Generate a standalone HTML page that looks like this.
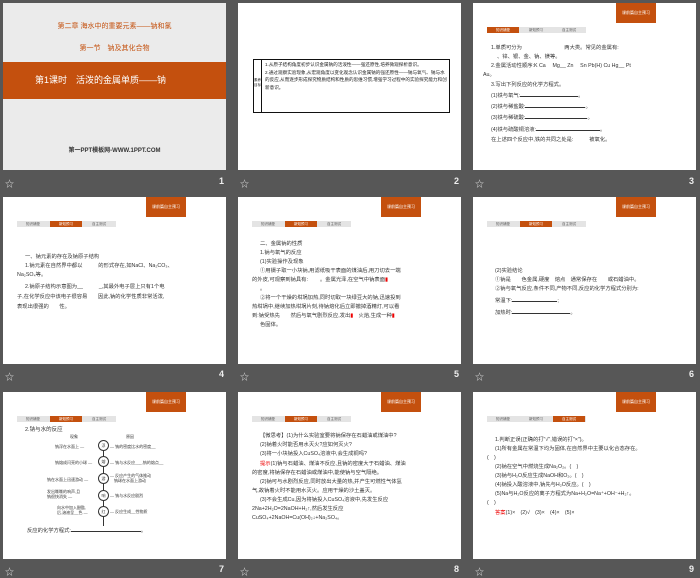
<!DOCTYPE html>
<html><head><meta charset="utf-8"><style>
*{margin:0;padding:0;box-sizing:border-box}
body{width:700px;height:577px;background:#575757;position:relative;overflow:hidden;font-family:"Liberation Sans","Noto Sans CJK SC",sans-serif}
.s{position:absolute;width:223px;height:167px;background:#fff;overflow:hidden;color:#333}
.cap{position:absolute;width:223px;height:14px;color:#eee;font-size:9px}
.cap .st{position:absolute;left:2px;top:1px;font-size:9px;color:#ddd}
.cap .n{position:absolute;right:2px;top:0;font-weight:bold;font-size:9px}
.tag{position:absolute;left:143px;top:0;width:40px;height:20px;background:#c4500e;color:#fff;font-size:4px;text-align:center;line-height:20px}
.tabs{position:absolute;left:14px;top:24px;width:99px;height:6px;background:#e4e4e4;font-size:3.5px;color:#555;display:flex}
.tabs span{flex:1;text-align:center;line-height:6px;margin-right:1px}
.tabs .a{background:#c4500e;color:#fff}
.t{position:absolute;font-size:5.3px;line-height:9px;white-space:nowrap;color:#333}
.u{display:inline-block;border-bottom:0.6px solid #333;height:6px}
.r{color:#e00}
</style></head><body>

<!-- slide 1 -->
<div class="s" style="left:3px;top:3px;background:#ebebeb">
  <div style="position:absolute;top:18px;width:100%;text-align:center;font-size:7px;color:#c4500e">第二章 海水中的重要元素——钠和氯</div>
  <div style="position:absolute;top:40px;width:100%;text-align:center;font-size:7px;color:#c4500e">第一节　钠及其化合物</div>
  <div style="position:absolute;top:59px;width:100%;height:37px;background:#c4500e;color:#fff;font-size:9px;line-height:37px;padding-left:32px">第1课时　活泼的金属单质——钠</div>
  <div style="position:absolute;top:142px;width:100%;text-align:center;font-size:6px;font-weight:bold;color:#333">第一PPT模板网-WWW.1PPT.COM</div>
</div>
<div class="cap" style="left:3px;top:176px"><span class="st">☆</span><span class="n">1</span></div>

<!-- slide 2 -->
<div class="s" style="left:238px;top:3px">
  <div style="position:absolute;left:15px;top:54px;width:80px;height:2px"></div>
  <div style="position:absolute;left:15px;top:56px;width:197px;height:54px;border:1.5px solid #111;font-size:4.6px;line-height:7.5px;padding:1px 2px 0 11px;color:#222">
    <div style="position:absolute;left:0;top:0;bottom:0;width:8px;border-right:1px solid #111;font-size:3.5px;line-height:5px;padding-top:18px;text-align:center">素养目标</div>
    1.从原子结构角度初步认识金属钠的活泼性——强还原性,培养微观探析意识。<br>2.通过观察实验现象,从宏观角度以变化观念认识金属钠的强还原性——钠与氧气、钠与水的反应,从而逐步形成探究物质结构和性质的思维习惯,增强学习过程中的实验探究能力和创新意识。
  </div>
</div>
<div class="cap" style="left:238px;top:176px"><span class="st">☆</span><span class="n">2</span></div>

<!-- slide 3 -->
<div class="s" style="left:473px;top:3px">
  <div class="tag">课前篇自主预习</div>
  <div class="tabs"><span class="a">知识铺垫</span><span>新知预习</span><span>自主测试</span></div>
  <div class="t" style="left:18px;top:41px">1.单质可分为　　　　　　　　两大类。常见的金属有:</div>
  <div class="t" style="left:24px;top:50px">、锌、银、金、钠、镁等。</div>
  <div class="t" style="left:18px;top:59px">2.金属活动性顺序:K Ca　 Mg__ Zn　 Sn Pb(H) Cu Hg__ Pt</div>
  <div class="t" style="left:10px;top:68px">Au。</div>
  <div class="t" style="left:18px;top:78px">3.写出下列反应的化学方程式。</div>
  <div class="t" style="left:18px;top:88px">(1)铁与氧气:<span class="u" style="width:58px"></span>。</div>
  <div class="t" style="left:18px;top:99px">(2)铁与稀盐酸:<span class="u" style="width:60px"></span>。</div>
  <div class="t" style="left:18px;top:110px">(3)铁与稀硫酸:<span class="u" style="width:62px"></span>。</div>
  <div class="t" style="left:18px;top:122px">(4)铁与硫酸铜溶液:<span class="u" style="width:64px"></span>。</div>
  <div class="t" style="left:18px;top:133px">在上述四个反应中,铁的共同之处是:　　　被氧化。</div>
</div>
<div class="cap" style="left:473px;top:176px"><span class="st">☆</span><span class="n">3</span></div>

<!-- slide 4 -->
<div class="s" style="left:3px;top:197px">
  <div class="tag">课前篇自主预习</div>
  <div class="tabs"><span>知识铺垫</span><span class="a">新知预习</span><span>自主测试</span></div>
  <div class="t" style="left:22px;top:56px">一、钠元素的存在及钠原子结构</div>
  <div class="t" style="left:22px;top:65px">1.钠元素在自然界中都以　　　的形式存在,如NaCl、Na₂CO₃、</div>
  <div class="t" style="left:14px;top:74px">Na₂SO₄等。</div>
  <div class="t" style="left:22px;top:86px">2.钠原子结构示意图为__　　　_,其最外电子层上只有1个电</div>
  <div class="t" style="left:14px;top:96px">子,在化学反应中该电子很容易　　因此,钠的化学性质非常活泼,</div>
  <div class="t" style="left:14px;top:106px">表现出很强的　　性。</div>
</div>
<div class="cap" style="left:3px;top:369px"><span class="st">☆</span><span class="n">4</span></div>

<!-- slide 5 -->
<div class="s" style="left:238px;top:197px">
  <div class="tag">课前篇自主预习</div>
  <div class="tabs"><span>知识铺垫</span><span class="a">新知预习</span><span>自主测试</span></div>
  <div class="t" style="left:22px;top:43px">二、金属钠的性质</div>
  <div class="t" style="left:22px;top:52px">1.钠与氧气的反应</div>
  <div class="t" style="left:22px;top:61px">(1)实验操作及现象</div>
  <div class="t" style="left:22px;top:70px">①用镊子取一小块钠,用滤纸吸干表面的煤油后,用刀切去一端</div>
  <div class="t" style="left:14px;top:79px">的外皮,可观察到钠具有:　　 。金属光泽,在空气中钠表面<span class="r">▮</span></div>
  <div class="t" style="left:22px;top:88px">。</div>
  <div class="t" style="left:22px;top:97px">②将一个干燥的坩埚加热,同时切取一块绿豆大的钠,迅速投到</div>
  <div class="t" style="left:14px;top:106px">热坩埚中,继续加热坩埚片刻,待钠熔化后立即撤掉酒精灯,可以看</div>
  <div class="t" style="left:14px;top:115px">到:钠受热先　　然后与氧气剧烈反应,发出<span class="r">▮</span>　火焰,生成一种<span class="r">▮</span></div>
  <div class="t" style="left:22px;top:124px">色固体。</div>
</div>
<div class="cap" style="left:238px;top:369px"><span class="st">☆</span><span class="n">5</span></div>

<!-- slide 6 -->
<div class="s" style="left:473px;top:197px">
  <div class="tag">课前篇自主预习</div>
  <div class="tabs"><span>知识铺垫</span><span class="a">新知预习</span><span>自主测试</span></div>
  <div class="t" style="left:22px;top:70px">(2)实验结论</div>
  <div class="t" style="left:22px;top:79px">①钠是　　色金属,硬度　熔点　通常保存在　　或石蜡油中。</div>
  <div class="t" style="left:22px;top:88px">②钠与氧气反应,条件不同,产物不同,反应的化学方程式分别为:</div>
  <div class="t" style="left:22px;top:99px">常温下:<span class="u" style="width:45px"></span>;</div>
  <div class="t" style="left:22px;top:111px">加热时:<span class="u" style="width:58px"></span>。</div>
</div>
<div class="cap" style="left:473px;top:369px"><span class="st">☆</span><span class="n">6</span></div>

<!-- slide 7 -->
<div class="s" style="left:3px;top:392px">
  <div class="tag">课前篇自主预习</div>
  <div class="tabs"><span>知识铺垫</span><span class="a">新知预习</span><span>自主测试</span></div>
  <div class="t" style="left:22px;top:34px;font-size:5.5px">2.钠与水的反应</div>
  <div class="t" style="left:67px;top:40px;font-size:4px">现象</div>
  <div class="t" style="left:123px;top:40px;font-size:4px">原因</div>
  <div style="position:absolute;left:100px;top:52px;width:1px;height:82px;background:#333"></div>
  <div class="t" style="left:52px;top:50px;font-size:4px">钠浮在水面上 —</div>
  <div class="t" style="left:52px;top:66px;font-size:4px">钠熔成闪亮的小球 —</div>
  <div class="t" style="left:44px;top:83px;font-size:4px">钠在水面上迅速游动 —</div>
  <div class="t" style="left:44px;top:97px;font-size:4px;line-height:5px">发出嘶嘶的响声,且<br>钠很快消失 —</div>
  <div class="t" style="left:54px;top:113px;font-size:4px;line-height:5px">向水中加入酚酞,<br>后,溶液呈__色 —</div>
  <div style="position:absolute;left:95px;top:48px;width:11px;height:11px;border:1px solid #333;border-radius:50%;background:#fff;font-size:4px;text-align:center;line-height:9px">浮</div>
  <div style="position:absolute;left:95px;top:64px;width:11px;height:11px;border:1px solid #333;border-radius:50%;background:#fff;font-size:4px;text-align:center;line-height:9px">熔</div>
  <div style="position:absolute;left:95px;top:81px;width:11px;height:11px;border:1px solid #333;border-radius:50%;background:#fff;font-size:4px;text-align:center;line-height:9px">游</div>
  <div style="position:absolute;left:95px;top:98px;width:11px;height:11px;border:1px solid #333;border-radius:50%;background:#fff;font-size:4px;text-align:center;line-height:9px">响</div>
  <div style="position:absolute;left:95px;top:114px;width:11px;height:11px;border:1px solid #333;border-radius:50%;background:#fff;font-size:4px;text-align:center;line-height:9px">红</div>
  <div class="t" style="left:107px;top:50px;font-size:4px">— 钠的密度比水的密度__</div>
  <div class="t" style="left:107px;top:66px;font-size:4px">— 钠与水反应___,钠的熔点__</div>
  <div class="t" style="left:107px;top:81px;font-size:4px;line-height:5px">— 反应产生的气体推动<br>　钠球在水面上游动</div>
  <div class="t" style="left:107px;top:99px;font-size:4px">— 钠与水反应剧烈</div>
  <div class="t" style="left:107px;top:115px;font-size:4px">— 反应生成__性物质</div>
  <div class="t" style="left:24px;top:134px">反应的化学方程式:<span class="u" style="width:70px"></span>。</div>
</div>
<div class="cap" style="left:3px;top:564px"><span class="st">☆</span><span class="n">7</span></div>

<!-- slide 8 -->
<div class="s" style="left:238px;top:392px">
  <div class="tag">课前篇自主预习</div>
  <div class="tabs"><span>知识铺垫</span><span class="a">新知预习</span><span>自主测试</span></div>
  <div class="t" style="left:22px;top:40px">【微思考】(1)为什么实验室要将钠保存在石蜡油或煤油中?</div>
  <div class="t" style="left:22px;top:49px">(2)钠着火时能否用水灭火?应如何灭火?</div>
  <div class="t" style="left:22px;top:58px">(3)将一小块钠投入CuSO₄溶液中,会生成铜吗?</div>
  <div class="t" style="left:22px;top:68px"><span class="r">提示</span>(1)钠与石蜡油、煤油不反应,且钠的密度大于石蜡油、煤油</div>
  <div class="t" style="left:14px;top:77px">的密度,将钠保存在石蜡油或煤油中,能使钠与空气隔绝。</div>
  <div class="t" style="left:22px;top:86px">(2)钠可与水剧烈反应,同时放出大量的热,并产生可燃性气体氢</div>
  <div class="t" style="left:14px;top:95px">气,故钠着火时不能用水灭火。应用干燥的沙土盖灭。</div>
  <div class="t" style="left:22px;top:104px">(3)不会生成Cu,因为将钠投入CuSO₄溶液中,先发生反应</div>
  <div class="t" style="left:14px;top:113px">2Na+2H₂O=2NaOH+H₂↑,然后发生反应</div>
  <div class="t" style="left:14px;top:122px">CuSO₄+2NaOH=Cu(OH)₂↓+Na₂SO₄。</div>
</div>
<div class="cap" style="left:238px;top:564px"><span class="st">☆</span><span class="n">8</span></div>

<!-- slide 9 -->
<div class="s" style="left:473px;top:392px">
  <div class="tag">课前篇自主预习</div>
  <div class="tabs"><span>知识铺垫</span><span>新知预习</span><span class="a">自主测试</span></div>
  <div class="t" style="left:22px;top:44px">1.判断正误(正确的打"√",错误的打"×")。</div>
  <div class="t" style="left:22px;top:53px">(1)所有金属在常温下均为固体,在自然界中主要以化合态存在。</div>
  <div class="t" style="left:14px;top:62px">(　)</div>
  <div class="t" style="left:22px;top:71px">(2)钠在空气中燃烧生成Na₂O₂。(　)</div>
  <div class="t" style="left:22px;top:80px">(3)钠与H₂O反应生成NaOH和O₂。(　)</div>
  <div class="t" style="left:22px;top:89px">(4)钠投入酸溶液中,钠先与H₂O反应。(　)</div>
  <div class="t" style="left:22px;top:98px">(5)Na与H₂O反应的离子方程式为Na+H₂O=Na⁺+OH⁻+H₂↑。</div>
  <div class="t" style="left:14px;top:107px">(　)</div>
  <div class="t" style="left:22px;top:117px"><span class="r">答案</span>(1)×　(2)√　(3)×　(4)×　(5)×</div>
</div>
<div class="cap" style="left:473px;top:564px"><span class="st">☆</span><span class="n">9</span></div>

</body></html>
